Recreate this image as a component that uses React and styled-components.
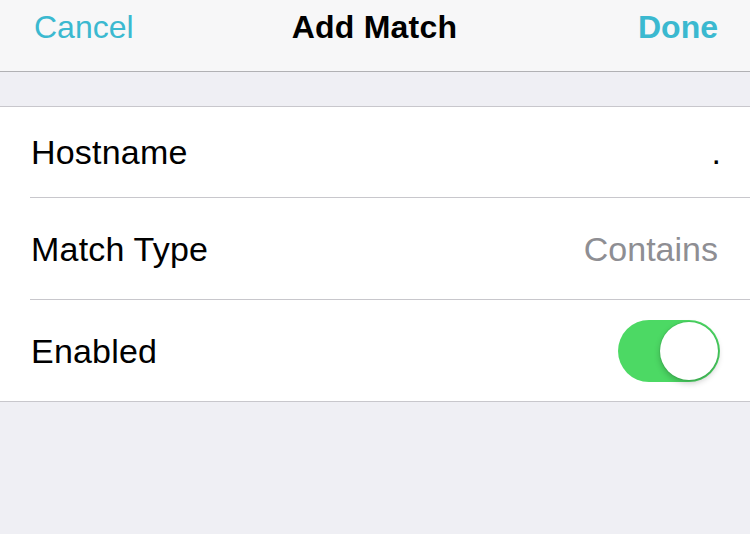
import React from "react";
import styled, { createGlobalStyle } from "styled-components";

const Global = createGlobalStyle`
  html, body { margin: 0; padding: 0; }
  body {
    background: #efeff4;
    font-family: "Liberation Sans", Arial, sans-serif;
    -webkit-font-smoothing: antialiased;
  }
`;

const Screen = styled.div`
  width: 750px;
  height: 534px;
  background: #efeff4;
  display: flex;
  flex-direction: column;
  overflow: hidden;
`;

const NavBar = styled.header`
  box-sizing: border-box;
  height: 72px;
  flex: none;
  background: #f7f7f8;
  border-bottom: 1px solid #b1b1b4;
  display: grid;
  grid-template-columns: 1fr auto 1fr;
  align-items: start;
  padding: 11px 32px 0 34px;
`;

const NavButton = styled.button`
  background: none;
  border: none;
  padding: 0;
  margin: 0;
  font-family: inherit;
  font-size: 32px;
  line-height: 32px;
  color: #3bb9d0;
  font-weight: ${(p) => (p.$bold ? 700 : 400)};
  justify-self: ${(p) => (p.$right ? "end" : "start")};
  cursor: pointer;
`;

const Title = styled.h1`
  margin: 0 3px 0 0;
  font-size: 32px;
  line-height: 32px;
  font-weight: 700;
  letter-spacing: 0.2px;
  color: #000;
`;

const Spacer = styled.div`
  height: 34px;
  flex: none;
`;

const Group = styled.section`
  background: #fff;
  border-top: 1px solid #c8c7cc;
  border-bottom: 1px solid #c8c7cc;
  display: flex;
  flex-direction: column;
  padding-left: 30px;
`;

const Row = styled.div`
  height: ${(p) => p.$h}px;
  display: flex;
  align-items: center;
  justify-content: space-between;
  padding-right: ${(p) => (p.$toggle ? 30 : 32)}px;
  border-bottom: ${(p) => (p.$last ? "none" : "1px solid #c8c7cc")};
`;

const Label = styled.span`
  font-size: 34px;
  line-height: 34px;
  letter-spacing: 0.2px;
  color: #000;
  padding-left: 1px;
`;

const Value = styled.span`
  font-size: 34px;
  line-height: 34px;
  color: ${(p) => (p.$muted ? "#8e8e93" : "#000")};
  margin-right: ${(p) => (p.$dot ? -3 : 0)}px;
`;

const Track = styled.div`
  width: 102px;
  height: 62px;
  border-radius: 31px;
  background: #4cd964;
  position: relative;
  flex: none;
`;

const Knob = styled.div`
  position: absolute;
  top: 2px;
  right: 2px;
  width: 58px;
  height: 58px;
  border-radius: 50%;
  background: #fff;
  box-shadow: 0 3px 6px rgba(0, 0, 0, 0.22), 0 0 0 1px rgba(0, 0, 0, 0.06);
`;

export default function App() {
  return (
    <Screen>
      <Global />
      <NavBar>
        <NavButton>Cancel</NavButton>
        <Title>Add Match</Title>
        <NavButton $bold $right>Done</NavButton>
      </NavBar>
      <Spacer />
      <Group>
        <Row $h={90}>
          <Label>Hostname</Label>
          <Value $dot>.</Value>
        </Row>
        <Row $h={101}>
          <Label>Match Type</Label>
          <Value $muted>Contains</Value>
        </Row>
        <Row $h={101} $last $toggle>
          <Label>Enabled</Label>
          <Track>
            <Knob />
          </Track>
        </Row>
      </Group>
    </Screen>
  );
}
